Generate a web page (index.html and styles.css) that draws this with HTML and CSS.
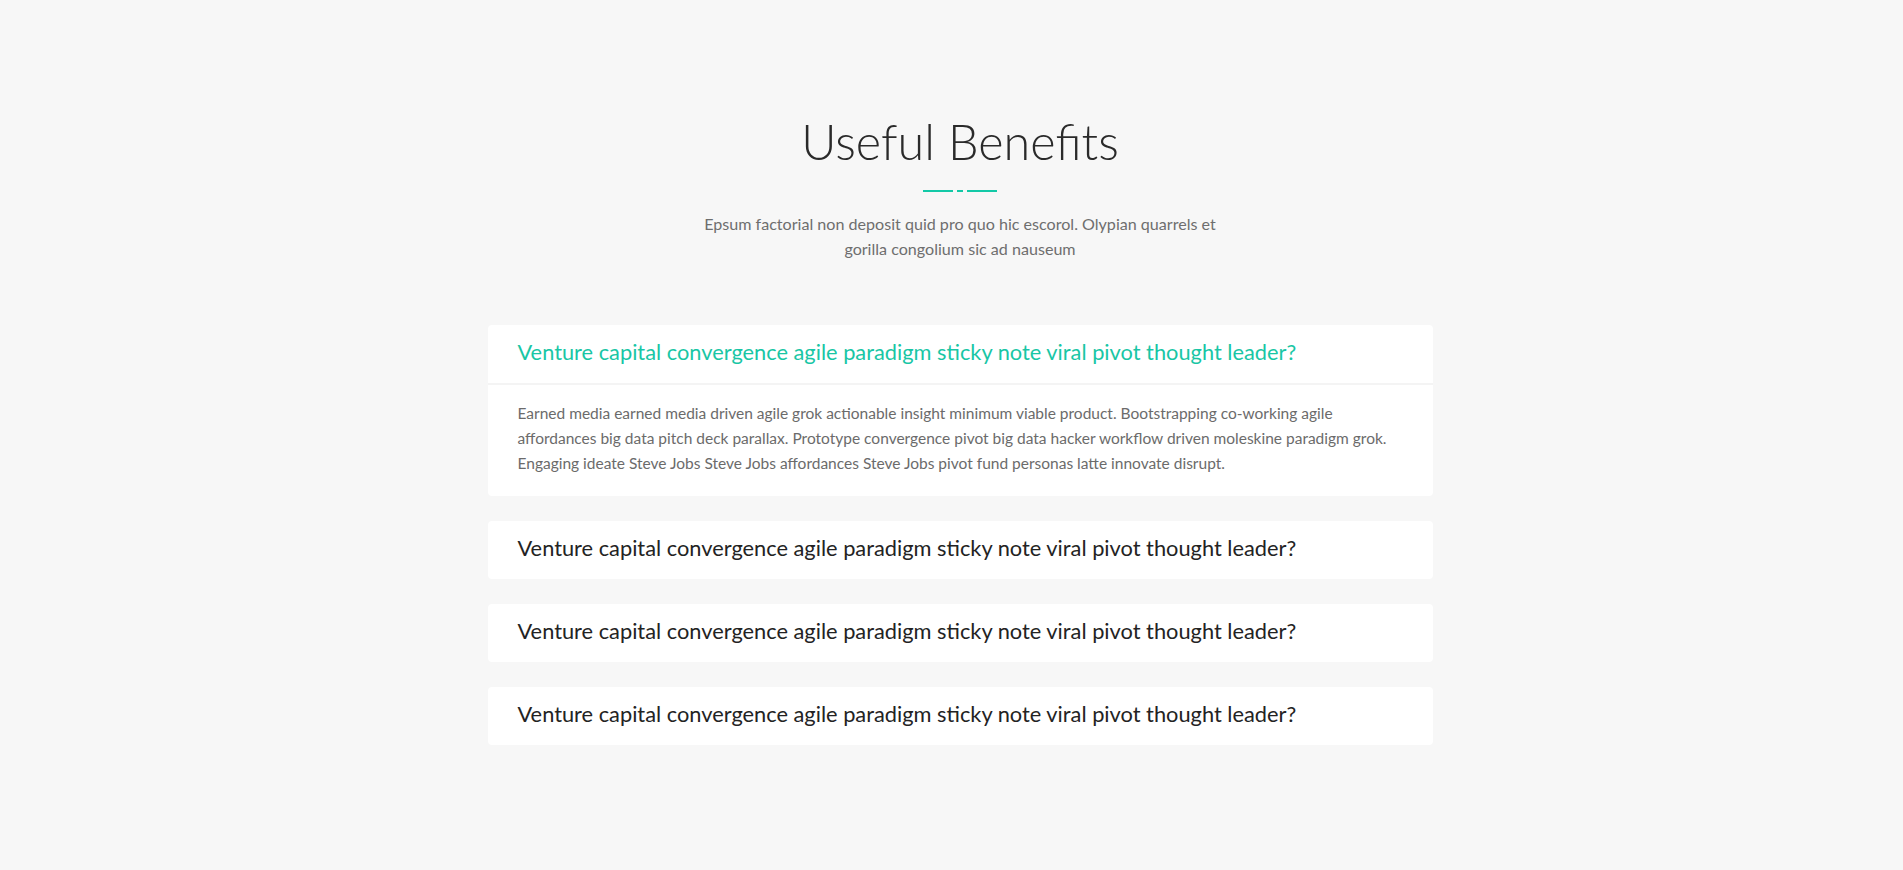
FILE: index.html
```html
<!DOCTYPE html>
<html lang="en">
<head>
<meta charset="utf-8">
<title>Useful Benefits</title>
<link rel="stylesheet" href="styles.css">
</head>
<body>
<section class="benefits">
  <header class="benefits-head">
    <h1 class="benefits-title">Useful Benefits</h1>
    <div class="divider"><span class="dash"></span><span class="dot"></span><span class="dash"></span></div>
    <p class="benefits-sub">Epsum factorial non deposit quid pro quo hic escorol. Olypian quarrels et gorilla congolium sic ad nauseum</p>
  </header>
  <div class="faq">
    <div class="faq-item open">
      <div class="faq-q">Venture capital convergence agile paradigm sticky note viral pivot thought leader?</div>
      <div class="faq-a">Earned media earned media driven agile grok actionable insight minimum viable product. Bootstrapping co-working agile affordances big data pitch deck parallax. Prototype convergence pivot big data hacker workflow driven moleskine paradigm grok. Engaging ideate Steve Jobs Steve Jobs affordances Steve Jobs pivot fund personas latte innovate disrupt.</div>
    </div>
    <div class="faq-item">
      <div class="faq-q">Venture capital convergence agile paradigm sticky note viral pivot thought leader?</div>
    </div>
    <div class="faq-item">
      <div class="faq-q">Venture capital convergence agile paradigm sticky note viral pivot thought leader?</div>
    </div>
    <div class="faq-item">
      <div class="faq-q">Venture capital convergence agile paradigm sticky note viral pivot thought leader?</div>
    </div>
  </div>
</section>
</body>
</html>
```
FILE: styles.css
```css
html, body {
  margin: 0;
  padding: 0;
  background: #f7f7f7;
}
body {
  font-family: Lato, "Liberation Sans", sans-serif;
  color: #222;
}
.benefits {
  padding: 111px 0 120px 17px;
  display: flex;
  flex-direction: column;
  align-items: center;
}
.benefits-head {
  display: flex;
  flex-direction: column;
  align-items: center;
  text-align: center;
}
.benefits-title {
  margin: 0;
  font-size: 48.5px;
  line-height: 60px;
  font-weight: 300;
  color: #2a2a2a;
}
.divider {
  margin-top: 19px;
  display: flex;
  gap: 4px;
  height: 2px;
}
.divider .dash {
  width: 30px;
  height: 2px;
  background: #13c9a7;
}
.divider .dot {
  width: 6px;
  height: 2px;
  background: #13c9a7;
}
.benefits-sub {
  margin: 19px 0 0;
  max-width: 540px;
  font-size: 16.1px;
  line-height: 25px;
  color: #6e6e6e;
}
.faq {
  margin-top: 64px;
  width: 945px;
  display: flex;
  flex-direction: column;
  gap: 25px;
}
.faq-item {
  background: #fff;
  border-radius: 4px;
}
.faq-q {
  padding: 13px 30px 17px;
  font-size: 21.8px;
  line-height: 28px;
  color: #232323;
}
.faq-item.open .faq-q {
  color: #19c6a5;
  border-bottom: 2px solid #f4f4f4;
}
.faq-a {
  padding: 16px 30px 20px;
  font-size: 15.5px;
  line-height: 25px;
  color: #6b6b6b;
}
```
